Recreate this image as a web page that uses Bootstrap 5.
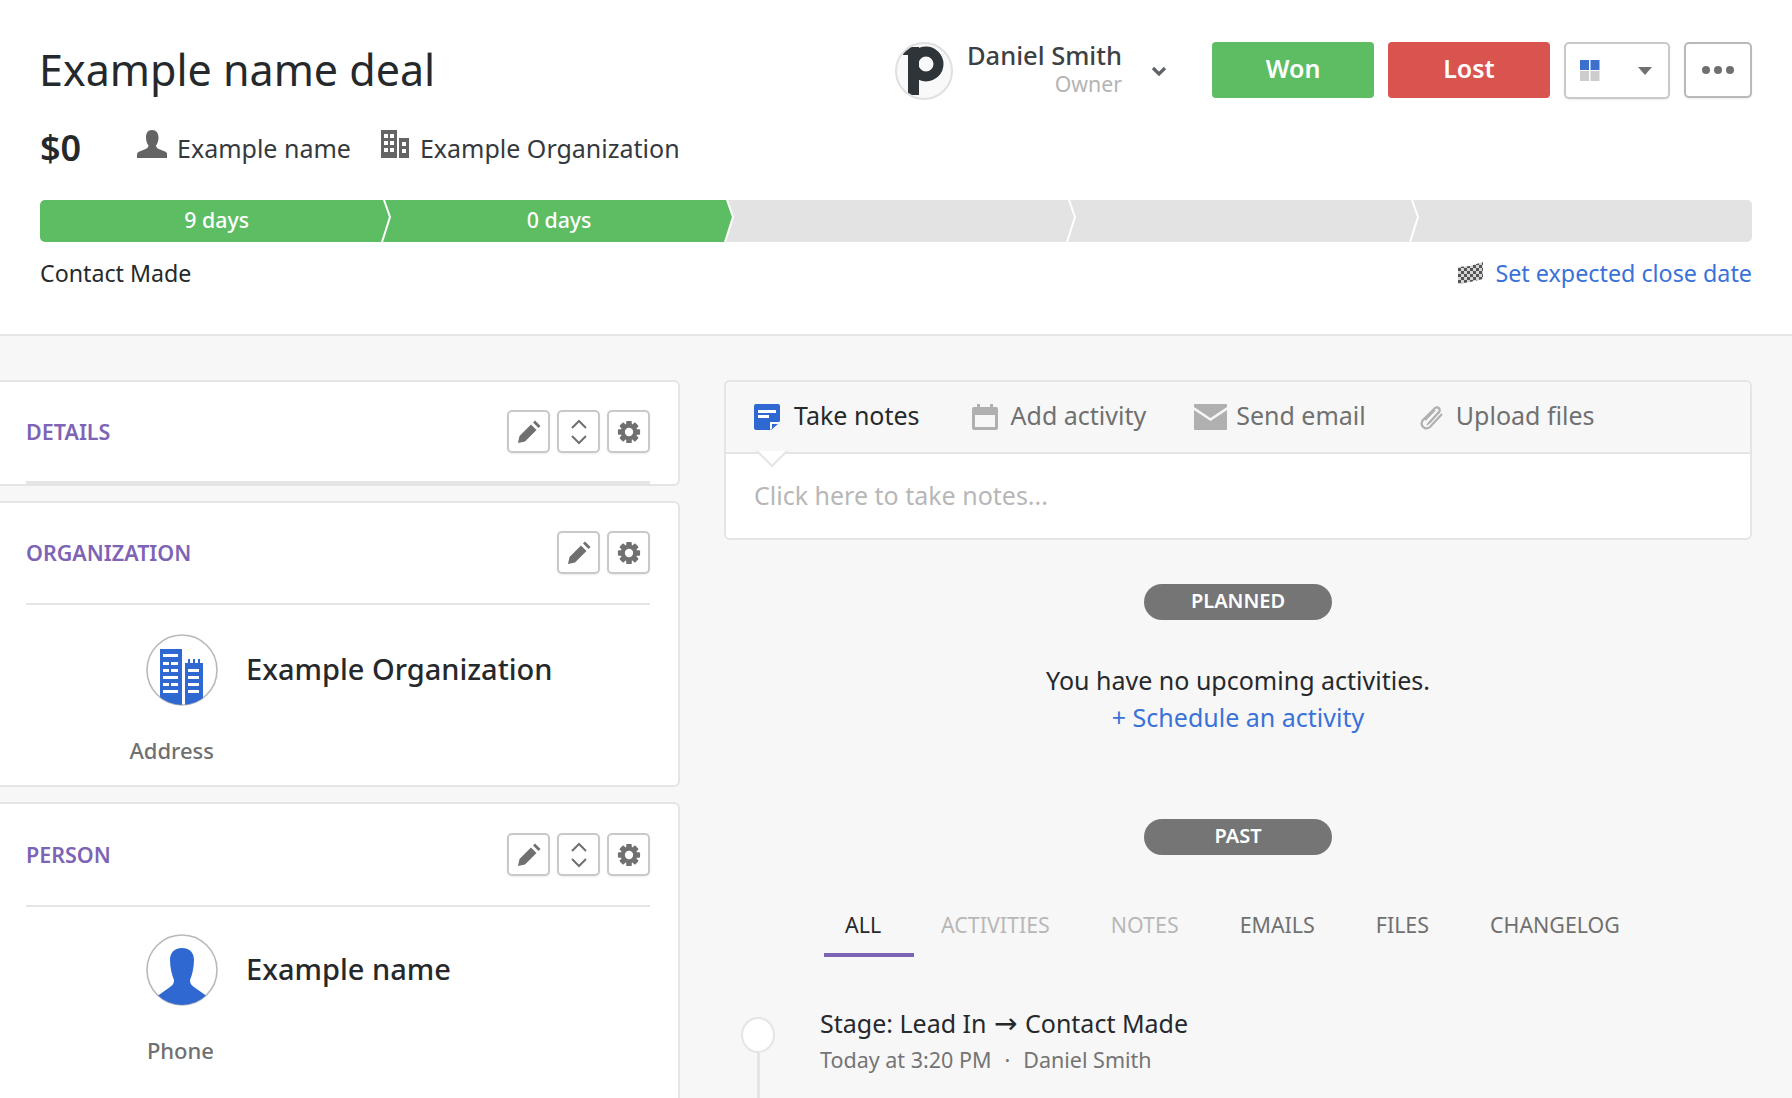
<!DOCTYPE html>
<html lang="en">
<head>
<meta charset="utf-8">
<title>Example name deal</title>
<link href="https://cdn.jsdelivr.net/npm/bootstrap@5.3.0/dist/css/bootstrap.min.css" rel="stylesheet">
<style>
html,body{height:1098px;overflow:hidden}
body{font-family:"Noto Sans",sans-serif;background:#f7f7f7;color:#26292c;font-size:24px;line-height:32px}
a{text-decoration:none;color:#3a72d8}
svg{display:block;flex:none}
.deal-head{background:#fff;height:336px;border-bottom:2px solid #e5e5e5;padding:42px 40px 0}
.top-line{height:58px}
.deal-title{font-size:43px;line-height:56px;font-weight:400;margin:0 0 0 -1px;color:#26292c}
.avatar{width:58px;height:58px;border:2px solid #e0e0e0;border-radius:50%;background:#f9f9f9;margin-right:14px;overflow:hidden}
.owner-name{font-size:25.500px;line-height:26px;font-weight:500;color:#3d4145}
.owner-role{font-size:21.300px;line-height:28px;color:#b4b4b4;text-align:right;margin-top:2px}
.owner{margin-right:45px}
.owner-caret{margin:24px 0 0 29px}
.pd-action{width:162px;height:56px;border:0;border-radius:4px;color:#fff;font-size:25px;font-weight:600;padding:0 0 5px;line-height:46px}
.pd-won,.pd-won:hover{background:#5dbd63;color:#fff}
.pd-lost,.pd-lost:hover{background:#d9534f;color:#fff;margin-left:14px}
.pd-tool{background:#fff;border:2px solid #c9c9c9;border-radius:5px;box-shadow:0 1px 2px rgba(0,0,0,.08);padding:0;display:flex;align-items:center;justify-content:center}
.pd-split{width:106px;height:57px;margin-left:14px;justify-content:space-between;padding:0 16px 0 14px}
.pd-more{width:68px;height:56px;margin-left:14px;border-color:#b9b9b9}
.sub-line{margin-top:28px;height:40px;font-size:25px;color:#35393d}
.amount{font-size:36px;font-weight:600;width:97px;color:#26292c}
.sub-text{margin-left:10px}
.sub-text.is-org{margin-left:11px}
.sub-org-icon{margin-left:30px}
.stage-track{margin-top:32px;height:42px;border-radius:5px}
.stage-seg{flex:1 1 0;position:relative;height:42px;color:#fff;font-size:21.300px;font-weight:500;line-height:40px;text-align:center;padding-left:11px;background:#e3e3e3}
.stage-seg.is-done{background:#5dbd63}
.stage-seg:first-child{border-radius:5px 0 0 5px}
.stage-seg:last-child{border-radius:0 5px 5px 0}
.stage-arrow{position:absolute;top:0;left:100%;z-index:2;margin-left:-1px}
.foot-line{margin-top:15px;font-size:23.200px;line-height:32px}
.foot-link{font-size:23.300px}
.foot-link svg{margin-right:12px}
.deal-body{height:762px;overflow:hidden}
.side-col{width:680px;padding-top:44px}
.pd-panel{background:#fff;border:2px solid #e5e5e5;border-left:0;border-radius:0 6px 6px 0;margin-bottom:15px;padding:0 28px 0 26px}
.pd-panel.is-open{padding-bottom:80px}
.panel-head{padding:28px 0 29px;border-bottom:2px solid #e5e5e5}
.panel-head.is-thick{border-bottom-width:3px;padding-bottom:28px}
.panel-head.is-tall{padding:29px 0 29px}
.panel-title{font-size:21.500px;font-weight:600;color:#7e64b5;line-height:32px;margin:0}
.panel-tools{gap:7px}
.panel-btn{width:43px;height:43px}
.panel-row{padding:29px 0 0 120px;gap:28px}
.panel-row.is-tight{padding-top:27px}
.panel-name{font-size:29px;line-height:40px;font-weight:500;color:#26292c;margin-top:-3px}
.panel-label{width:188px;text-align:right;font-size:22px;line-height:30px;color:#707070;font-weight:500;margin-top:29px;padding-bottom:20px}
.main-col{width:1028px;margin-left:44px;padding-top:44px}
.composer{border:2px solid #e5e5e5;border-radius:6px;background:#fff;height:160px}
.composer-tabs{height:72px;background:#f7f7f7;border-bottom:2px solid #e5e5e5;border-radius:5px 5px 0 0;padding:0 0 0 28px;position:relative;font-size:25px;color:#707070}
.c-tab{display:flex;align-items:center;color:#707070}
.c-tab span{margin-bottom:4px}
.c-tab.is-on{color:#26292c}
.c-tab svg{margin-right:13px}
.c-tab.is-on svg{margin-right:14px}
.c-tab.is-act{margin-left:52px}
.c-tab.is-mail{margin-left:48px}
.c-tab.is-mail svg{margin-right:9px}
.c-tab.is-file{margin-left:52px}
.c-tab.is-file svg{margin-right:11px}
.composer-notch{position:absolute;left:30px;bottom:-16px;z-index:2}
.composer-input{padding:23px 28px;font-size:25px;line-height:36px;color:#b7b7b7}
.state-pill{width:188px;height:36px;border-radius:18px;background:#757575;color:#fff;font-size:20px;font-weight:600;line-height:34px;text-align:center;margin:0 auto}
.state-pill.is-planned{margin-top:44px}
.empty-note{text-align:center;font-size:25px;line-height:37px;color:#26292c;margin:42px 0 83px}
.hist-tabs{margin:50px 0 0 100px;height:52px;font-size:21.400px;line-height:32px}
.hist-tab{padding:4px 20px 0;margin-right:21px;height:48px;color:#707070}
.hist-tab.is-on{color:#26292c;border-bottom:4px solid #7e64b5;height:52px;width:90px;margin-right:7px;padding-left:21px}
.hist-tab.is-off{color:#b7b7b7}
.timeline{margin:39px 0 0 17px;height:120px}
.tl-rail{width:34px;padding-top:21px}
.tl-dot{width:34px;height:36px;border-radius:50%;background:#fff;border:2px solid #e5e5e5}
.tl-line{width:3px;height:82px;background:#e5e5e5;margin:0 auto}
.tl-text{margin-left:45px;padding-top:10px}
.tl-title{font-size:25px;line-height:34px;color:#26292c}
.tl-arrow{font-family:"DejaVu Sans",sans-serif;font-size:28px;line-height:1;margin:0 1px}
.tl-meta{font-size:21.500px;line-height:32px;color:#747474;margin-top:4px}
.tl-sep{margin:0 13px}
</style>
</head>
<body>
<header class="deal-head">
  <div class="top-line d-flex align-items-start">
    <h1 class="deal-title flex-grow-1">Example name deal</h1>
    <div class="avatar d-flex align-items-center justify-content-center">
      <svg width="54" height="54" viewBox="0 0 54 54"><path d="M6 3h16v48H11V11H6z" fill="#2f3438"/><circle cx="29" cy="20" r="12.500" fill="none" stroke="#2f3438" stroke-width="10"/></svg>
    </div>
    <div class="owner d-flex align-items-start">
      <div>
        <div class="owner-name">Daniel Smith</div>
        <div class="owner-role">Owner</div>
      </div>
      <svg class="owner-caret" width="16" height="11" viewBox="0 0 16 11"><path d="M2 2l6 6 6-6" fill="none" stroke="#5f6368" stroke-width="3.200"/></svg>
    </div>
    <button class="btn pd-action pd-won" type="button">Won</button>
    <button class="btn pd-action pd-lost" type="button">Lost</button>
    <button class="btn pd-tool pd-split" type="button">
      <svg width="20" height="21" viewBox="0 0 20 21"><rect width="9" height="10" fill="#3b70cc"/><rect x="10.500" width="9" height="10" fill="#3b70cc"/><rect y="11" width="9" height="10" fill="#cdcdcd"/><rect x="10.500" y="11" width="9" height="10" fill="#cdcdcd"/></svg>
      <svg width="14" height="8" viewBox="0 0 14 8"><path d="M0 0h14L7 8z" fill="#707070"/></svg>
    </button>
    <button class="btn pd-tool pd-more" type="button">
      <svg width="32" height="8" viewBox="0 0 32 8"><circle cx="4" cy="4" r="4" fill="#707070"/><circle cx="16" cy="4" r="4" fill="#707070"/><circle cx="28" cy="4" r="4" fill="#707070"/></svg>
    </button>
  </div>
  <div class="sub-line d-flex align-items-center">
    <div class="amount">$0</div>
    <svg width="30" height="28" viewBox="0 0 30 28" class="mb-2"><path d="M15 0c4.500 0 6.500 3.500 6.500 7.500 0 3.500-1 6-2.500 8 .2 2 1.500 3 4 4l5 2c1.500.7 2.500 1.800 2.500 3.500V28H0v-3c0-1.700 1-2.800 2.500-3.500l5-2c2.500-1 3.800-2 4-4-1.500-2-2.500-4.500-2.500-8C9 3.500 10.500 0 15 0z" fill="#646464"/></svg>
    <span class="sub-text">Example name</span>
    <svg width="28" height="28" viewBox="0 0 28 28" class="mb-2 sub-org-icon"><path fill-rule="evenodd" fill="#646464" d="M0 0h16v28H0zM3 4v4h4V4zm6 0v4h4V4zM3 11v4h4v-4zm6 0v4h4v-4zM3 18v4h4v-4zm6 0v4h4v-4zM18 8h10v20H18zm3 4v4h4v-4zm0 7v4h4v-4z"/></svg>
    <span class="sub-text is-org">Example Organization</span>
  </div>
  <div class="stage-track d-flex">
    <div class="stage-seg is-done">9 days<svg class="stage-arrow" width="11" height="42" viewBox="0 0 11 42"><path d="M3 0L9 17 1 42H0V0z" fill="#5dbd63"/><path d="M3 0L9 17 1 42" fill="none" stroke="#fff" stroke-width="2"/></svg></div>
    <div class="stage-seg is-done">0 days<svg class="stage-arrow" width="11" height="42" viewBox="0 0 11 42"><path d="M3 0L9 17 1 42H0V0z" fill="#5dbd63"/><path d="M3 0L9 17 1 42" fill="none" stroke="#fff" stroke-width="2"/></svg></div>
    <div class="stage-seg"><svg class="stage-arrow" width="11" height="42" viewBox="0 0 11 42"><path d="M3 0L9 17 1 42" fill="none" stroke="#fff" stroke-width="2"/></svg></div>
    <div class="stage-seg"><svg class="stage-arrow" width="11" height="42" viewBox="0 0 11 42"><path d="M3 0L9 17 1 42" fill="none" stroke="#fff" stroke-width="2"/></svg></div>
    <div class="stage-seg"></div>
  </div>
  <div class="foot-line d-flex justify-content-between align-items-center">
    <span>Contact Made</span>
    <a class="foot-link d-flex align-items-center" href="#">
      <svg width="25" height="22" viewBox="0 0 25 22"><defs><pattern id="chk" width="6" height="6" patternUnits="userSpaceOnUse"><rect width="6" height="6" fill="#d4d4d4"/><rect width="3" height="3" fill="#555"/><rect x="3" y="3" width="3" height="3" fill="#555"/></pattern></defs><path d="M0 5l12-1 13-4v17l-13 3-12 2z" fill="url(#chk)"/></svg>
      Set expected close date
    </a>
  </div>
</header>

<div class="deal-body d-flex">
  <aside class="side-col">
    <section class="pd-panel">
      <div class="panel-head is-thick d-flex justify-content-between align-items-center">
        <h2 class="panel-title">DETAILS</h2>
        <div class="d-flex panel-tools">
          <button class="btn pd-tool panel-btn" type="button"><svg width="26" height="26" viewBox="0 0 26 26"><path d="M2 24l1.500-7L15 5.500l5.500 5.500L9 22.500z" fill="#707070"/><path d="M17 3.500l2-2 5.500 5.500-2 2z" fill="#707070"/></svg></button>
          <button class="btn pd-tool panel-btn" type="button"><svg width="20" height="26" viewBox="0 0 20 26"><path d="M3 9l7-7 7 7M3 17l7 7 7-7" fill="none" stroke="#707070" stroke-width="2"/></svg></button>
          <button class="btn pd-tool panel-btn" type="button"><svg width="24" height="24" viewBox="0 0 26 26"><g fill="#707070"><rect x="10" y="1" width="6" height="24" rx="1"/><rect x="10" y="1" width="6" height="24" rx="1" transform="rotate(45 13 13)"/><rect x="10" y="1" width="6" height="24" rx="1" transform="rotate(90 13 13)"/><rect x="10" y="1" width="6" height="24" rx="1" transform="rotate(135 13 13)"/><circle cx="13" cy="13" r="9"/></g><circle cx="13" cy="13" r="4.500" fill="#fff"/></svg></button>
        </div>
      </div>
    </section>

    <section class="pd-panel">
      <div class="panel-head d-flex justify-content-between align-items-center">
        <h2 class="panel-title">ORGANIZATION</h2>
        <div class="d-flex panel-tools">
          <button class="btn pd-tool panel-btn" type="button"><svg width="26" height="26" viewBox="0 0 26 26"><path d="M2 24l1.500-7L15 5.500l5.500 5.500L9 22.500z" fill="#707070"/><path d="M17 3.500l2-2 5.500 5.500-2 2z" fill="#707070"/></svg></button>
          <button class="btn pd-tool panel-btn" type="button"><svg width="24" height="24" viewBox="0 0 26 26"><g fill="#707070"><rect x="10" y="1" width="6" height="24" rx="1"/><rect x="10" y="1" width="6" height="24" rx="1" transform="rotate(45 13 13)"/><rect x="10" y="1" width="6" height="24" rx="1" transform="rotate(90 13 13)"/><rect x="10" y="1" width="6" height="24" rx="1" transform="rotate(135 13 13)"/><circle cx="13" cy="13" r="9"/></g><circle cx="13" cy="13" r="4.500" fill="#fff"/></svg></button>
        </div>
      </div>
      <div class="panel-row d-flex align-items-center">
        <svg width="72" height="72" viewBox="0 0 72 72"><defs><clipPath id="c1"><circle cx="36" cy="36" r="35"/></clipPath></defs><circle cx="36" cy="36" r="35" fill="#fff" stroke="#b9b9b9" stroke-width="1.600"/><g clip-path="url(#c1)"><path d="M14 15h22v57H14zM39 29h3v-4h2v4h3v-4h2v4h3v-4h2v4h3v43H39z" fill="#2f68d0"/><g fill="#fff"><rect x="17" y="20" width="15" height="3"/><rect x="17" y="28" width="6" height="3"/><rect x="25" y="28" width="7" height="3"/><rect x="17" y="35" width="6" height="3"/><rect x="25" y="35" width="7" height="3"/><rect x="17" y="42" width="15" height="3"/><rect x="17" y="49" width="6" height="3"/><rect x="25" y="49" width="7" height="3"/><rect x="17" y="56" width="15" height="3"/><rect x="42" y="35" width="11" height="3"/><rect x="42" y="42" width="11" height="3"/><rect x="42" y="49" width="11" height="3"/><rect x="42" y="56" width="11" height="3"/></g></g></svg>
        <div class="panel-name">Example Organization</div>
      </div>
      <div class="panel-label">Address</div>
    </section>

    <section class="pd-panel is-open">
      <div class="panel-head is-tall d-flex justify-content-between align-items-center">
        <h2 class="panel-title">PERSON</h2>
        <div class="d-flex panel-tools">
          <button class="btn pd-tool panel-btn" type="button"><svg width="26" height="26" viewBox="0 0 26 26"><path d="M2 24l1.500-7L15 5.500l5.500 5.500L9 22.500z" fill="#707070"/><path d="M17 3.500l2-2 5.500 5.500-2 2z" fill="#707070"/></svg></button>
          <button class="btn pd-tool panel-btn" type="button"><svg width="20" height="26" viewBox="0 0 20 26"><path d="M3 9l7-7 7 7M3 17l7 7 7-7" fill="none" stroke="#707070" stroke-width="2"/></svg></button>
          <button class="btn pd-tool panel-btn" type="button"><svg width="24" height="24" viewBox="0 0 26 26"><g fill="#707070"><rect x="10" y="1" width="6" height="24" rx="1"/><rect x="10" y="1" width="6" height="24" rx="1" transform="rotate(45 13 13)"/><rect x="10" y="1" width="6" height="24" rx="1" transform="rotate(90 13 13)"/><rect x="10" y="1" width="6" height="24" rx="1" transform="rotate(135 13 13)"/><circle cx="13" cy="13" r="9"/></g><circle cx="13" cy="13" r="4.500" fill="#fff"/></svg></button>
        </div>
      </div>
      <div class="panel-row is-tight d-flex align-items-center">
        <svg width="72" height="72" viewBox="0 0 72 72"><defs><clipPath id="c2"><circle cx="36" cy="36" r="35"/></clipPath></defs><circle cx="36" cy="36" r="35" fill="#fff" stroke="#b9b9b9" stroke-width="1.600"/><g clip-path="url(#c2)"><path d="M36 14c7 0 12 4 12 12 0 8-2 15-4 20 0 3 1 5 4 7l14 10v10H10V63l14-10c3-2 4-4 4-7-2-5-4-12-4-20 0-8 5-12 12-12z" fill="#2f68d0"/></g></svg>
        <div class="panel-name">Example name</div>
      </div>
      <div class="panel-label">Phone</div>
    </section>
  </aside>

  <main class="main-col">
    <section class="composer">
      <div class="composer-tabs d-flex align-items-center">
        <a class="c-tab is-on" href="#"><svg width="26" height="26" viewBox="0 0 26 26"><path d="M2 0h22a2 2 0 0 1 2 2v15l-9 9H2a2 2 0 0 1-2-2V2a2 2 0 0 1 2-2z" fill="#2f68d0"/><rect x="4" y="6" width="18" height="3" fill="#fff"/><rect x="4" y="11" width="11" height="3" fill="#fff"/><path d="M16 18h10l-10 8z" fill="#fff"/><path d="M18 20h6l-6 5z" fill="#2f68d0"/></svg><span>Take notes</span></a>
        <a class="c-tab is-act" href="#"><svg width="26" height="26" viewBox="0 0 26 26"><path d="M2 3h22a2 2 0 0 1 2 2v19a2 2 0 0 1-2 2H2a2 2 0 0 1-2-2V5a2 2 0 0 1 2-2zm1 8v12h20V11z" fill="#b0b0b0" fill-rule="evenodd"/><rect x="5" y="0" width="3" height="5" fill="#b0b0b0"/><rect x="18" y="0" width="3" height="5" fill="#b0b0b0"/></svg><span>Add activity</span></a>
        <a class="c-tab is-mail" href="#"><svg width="33" height="26" viewBox="0 0 33 26"><path d="M1 0h31a1 1 0 0 1 1 1v2L16.500 14 0 3V1a1 1 0 0 1 1-1zM0 6l16.500 11L33 6v19a1 1 0 0 1-1 1H1a1 1 0 0 1-1-1z" fill="#b0b0b0"/></svg><span>Send email</span></a>
        <a class="c-tab is-file" href="#"><svg width="27" height="27" viewBox="0 0 27 27"><path d="M11 19l10-11c2-3-1-6-4-4L5 16c-4 5 2 11 7 7l12-13" fill="none" stroke="#b0b0b0" stroke-width="2.200"/><path d="M7 16L17 6M9 21l13-14" fill="none" stroke="#b0b0b0" stroke-width="1.800"/></svg><span>Upload files</span></a>
        <svg class="composer-notch" width="32" height="18" viewBox="0 0 32 18"><path d="M1 1L16 16 31 1" fill="#fff" stroke="#e5e5e5" stroke-width="2"/></svg>
      </div>
      <div class="composer-input">Click here to take notes...</div>
    </section>
    <div class="state-pill is-planned">PLANNED</div>
    <p class="empty-note">You have no upcoming activities.<br><a href="#">+ Schedule an activity</a></p>
    <div class="state-pill">PAST</div>
    <nav class="hist-tabs d-flex">
      <a class="hist-tab is-on" href="#">ALL</a>
      <a class="hist-tab is-off" href="#">ACTIVITIES</a>
      <a class="hist-tab is-off" href="#">NOTES</a>
      <a class="hist-tab" href="#">EMAILS</a>
      <a class="hist-tab" href="#">FILES</a>
      <a class="hist-tab" href="#">CHANGELOG</a>
    </nav>
    <div class="timeline d-flex">
      <div class="tl-rail"><div class="tl-dot"></div><div class="tl-line"></div></div>
      <div class="tl-text">
        <div class="tl-title">Stage: Lead In <span class="tl-arrow">→</span> Contact Made</div>
        <div class="tl-meta">Today at 3:20 PM<span class="tl-sep">·</span>Daniel Smith</div>
      </div>
    </div>
  </main>
</div>
<script src="https://cdn.jsdelivr.net/npm/bootstrap@5.3.0/dist/js/bootstrap.bundle.min.js"></script>
</body>
</html>
